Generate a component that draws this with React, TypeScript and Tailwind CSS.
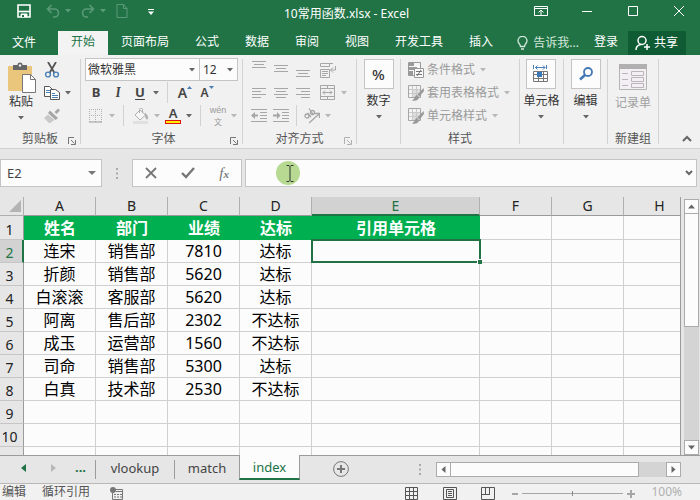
import React from 'react';

interface Employee {
    name: string;
    department: string;
    score: number;
    status: string;
}

const employees: Employee[] = [
    { name: '连宋', department: '销售部', score: 7810, status: '达标' },
    { name: '折颜', department: '销售部', score: 5620, status: '达标' },
    { name: '白滚滚', department: '客服部', score: 5620, status: '达标' },
    { name: '阿离', department: '售后部', score: 2302, status: '不达标' },
    { name: '成玉', department: '运营部', score: 1560, status: '不达标' },
    { name: '司命', department: '销售部', score: 5300, status: '达标' },
    { name: '白真', department: '技术部', score: 2530, status: '不达标' },
];

const menuTabs = ['开始', '页面布局', '公式', '数据', '审阅', '视图', '开发工具', '插入'];
const columns = ['A', 'B', 'C', 'D', 'E', 'F', 'G', 'H'];
const headers = ['姓名', '部门', '业绩', '达标', '引用单元格', '', '', ''];

function Icon({ w = 16, h = 16, className = '', children }: { w?: number; h?: number; className?: string; children: React.ReactNode }) {
    return (
        <svg width={w} height={h} viewBox={`0 0 ${w} ${h}`} fill="none" stroke="currentColor" className={`shrink-0 ${className}`} aria-hidden="true">
            {children}
        </svg>
    );
}

function Arrow({ className = 'text-[#666666]' }: { className?: string }) {
    return (
        <Icon w={6} h={4} className={className}>
            <path d="M0 0h6L3 3.5z" fill="currentColor" stroke="none" />
        </Icon>
    );
}

function Tool({ label, className = '', children }: { label: string; className?: string; children: React.ReactNode }) {
    return (
        <button aria-label={label} className={`flex h-[23px] w-[22px] shrink-0 items-center justify-center ${className}`}>
            {children}
        </button>
    );
}

function DropButton({ label, dim = false }: { label: string; dim?: boolean }) {
    return (
        <button aria-label={label} className="flex h-[23px] w-[10px] shrink-0 items-center justify-center">
            <Arrow className={dim ? 'text-[#b8b8b8]' : 'text-[#666666]'} />
        </button>
    );
}

// n horizontal strokes, each [x, y, width]
function Lines({ rows }: { rows: number[][] }) {
    return (
        <Icon w={16} h={20} className="text-[#a6a6a6]">
            <g fill="currentColor" stroke="none">
                {rows.map(([x, y, w], i) => <rect key={i} x={x} y={y} width={w} height={1} />)}
            </g>
        </Icon>
    );
}

function Launcher({ dim = false }: { dim?: boolean }) {
    return (
        <button aria-label="更多选项" className="absolute right-[4px] bottom-[2px]">
            <Icon w={8} h={8} className={dim ? 'text-[#b0b0b0]' : 'text-[#777777]'}>
                <path d="M.5 7V.5H6M3 3l3.5 3.5M7.500 3v4.500H3" />
            </Icon>
        </button>
    );
}

function Group({ title, className, launcher, children }: { title?: string; className: string; launcher?: React.ReactNode; children: React.ReactNode }) {
    return (
        <>
            <div className={`relative flex h-[89px] shrink-0 flex-col justify-between ${className}`}>
                <div>{children}</div>
                <div className="text-center leading-4 text-[#555555]">{title}</div>
                {launcher}
            </div>
            <div className="mt-px h-[85px] w-px shrink-0 bg-[#d2d2d2]" />
        </>
    );
}

function BigButton({ label, children }: { label: string; children: React.ReactNode }) {
    return (
        <button className="mx-auto flex flex-col items-center pt-px text-[#333333]">
            <span className="flex size-[30px] items-center justify-center border border-[#c4c4c4] bg-[#fcfcfc]">{children}</span>
            <span className="mt-1 leading-4">{label}</span>
            <span className="mt-[6px]"><Arrow /></span>
        </button>
    );
}

function TitleBar() {
    return (
        <div className="grid h-[31px] grid-cols-[1fr_auto_1fr] pt-1 pr-[14px] pl-[17px]">
            <div className="flex h-[14px] items-center">
                <button aria-label="保存">
                    <Icon w={14} h={14}>
                        <path d="M1 1h12v12H1z" strokeWidth="1.600" />
                        <path d="M1 7.500h12" strokeWidth="1.600" />
                        <path d="M4 13V10h6v3" fill="currentColor" />
                        <path d="M5 11h2v2H5z" fill="#217346" stroke="none" />
                    </Icon>
                </button>
                <button aria-label="撤消" className="ml-[15px] flex items-center gap-[5px] text-[#5b9a78]">
                    <Icon w={14} h={14}>
                        <path d="M5.500 1 1.500 5l4 4M2 5h6.500a4 4 0 0 1 0 8H7" strokeWidth="1.600" />
                    </Icon>
                    <Arrow className="text-[#5b9a78]" />
                </button>
                <button aria-label="恢复" className="ml-[10px] flex items-center gap-[5px] text-[#5b9a78]">
                    <Icon w={14} h={14}>
                        <path d="m8.500 1 4 4-4 4M12 5H5.500a4 4 0 0 0 0 8H7" strokeWidth="1.600" />
                    </Icon>
                    <Arrow className="text-[#5b9a78]" />
                </button>
                <button aria-label="新建" className="ml-[10px] text-[#5b9a78]">
                    <Icon w={12} h={14}>
                        <path d="M1 .5h6.500l3.500 4v9H1zM7.500.5v4H11" />
                    </Icon>
                </button>
                <button aria-label="自定义快速访问工具栏" className="ml-5">
                    <Icon w={6} h={8}>
                        <path d="M0 2.500h6" />
                        <path d="M0 4.500h6L3 8z" fill="currentColor" stroke="none" />
                    </Icon>
                </button>
            </div>
            <h1 className="pr-[10px] text-[12px] leading-5">10常用函数.xlsx - Excel</h1>
            <div className="flex h-[14px] items-center justify-end gap-8">
                <button aria-label="功能区显示选项">
                    <Icon w={14} h={14}>
                        <path d="M.5 2.500h13v9H.5zM.5 4.500h13M7 11V6M4.500 8.500 7 6l2.500 2.500" />
                    </Icon>
                </button>
                <button aria-label="最小化"><Icon w={14} h={14}><path d="M2 7.500h10" /></Icon></button>
                <button aria-label="最大化"><Icon w={14} h={14}><path d="M2.500 2.500h9v9h-9z" /></Icon></button>
                <button aria-label="关闭"><Icon w={14} h={14}><path d="m2 2 10 10M12 2 2 12" /></Icon></button>
            </div>
        </div>
    );
}

function MenuBar() {
    return (
        <nav className="flex h-6 items-stretch whitespace-nowrap">
            <button className="w-[58px] pr-[10px] pl-3 text-left">文件</button>
            {menuTabs.map((tab) => (
                <button key={tab} className={tab === '开始' ? 'bg-[#f3f3f3] px-[13px] pb-[2px] text-[#217346]' : 'px-[13px] pb-[2px]'}>{tab}</button>
            ))}
            <button className="ml-auto flex items-center gap-[5px] pb-px text-[#d5e8dc]">
                <Icon w={11} h={14}>
                    <path d="M3.500 10.500C3.500 8 1 7.500 1 4.800a4.500 4.500 0 0 1 9 0c0 2.700-2.500 3.200-2.500 5.700zM4 13h3" strokeWidth="1.300" />
                </Icon>
                告诉我...
            </button>
            <button className="ml-[15px] pb-[2px]">登录</button>
            <button className="mr-[14px] ml-[10px] flex items-center gap-[3px] bg-[#0f5c34] pr-2 pl-[7px]">
                <Icon w={16} h={16}>
                    <circle cx="7" cy="5.500" r="4" strokeWidth="1.500" />
                    <path d="M1 15c0-3 2-5 5-5.500M12 9v6M9 12h6" strokeWidth="1.500" />
                </Icon>
                共享
            </button>
        </nav>
    );
}

// small table with a brush lying across it
function TableIcon() {
    return (
        <Icon className="text-[#a6a6a6]">
            <path d="M.5.5h12v12H.5z" fill="#f3f3f3" />
            <path d="M5 5h7v7H5z" fill="#dddddd" stroke="none" />
            <path d="M4.500 1v11M8.500 1v11M1 4.500h11M1 8.500h11" stroke="#c9c9c9" />
            <path d="M15.500 3 9.500 9.500l2 2L16 6z" fill="#999999" stroke="none" />
            <path d="M9 10c-2.500.5-2 4-5 5.500 4 .8 7-.5 7-3.500z" fill="#999999" stroke="none" />
        </Icon>
    );
}

function Ribbon() {
    return (
        <div className="flex h-[94px] items-start border-b border-[#cfcfcf] bg-[#f1f1f1] pt-[3px] whitespace-nowrap">
            <Group title="剪贴板" className="w-20" launcher={<Launcher />}>
                <div className="flex gap-[5px] pl-[6px]">
                    <button className="flex w-[30px] flex-col items-center pt-1 text-[#333333]">
                        <Icon w={30} h={32}>
                            <rect x="2" y="4" width="24" height="25" rx="1" fill="#e9c67b" stroke="none" />
                            <path d="M7 3h4.500a2.500 2.500 0 0 1 5 0H21v5H7z" fill="#666666" stroke="none" />
                            <circle cx="14" cy="3.500" r="1.200" fill="#f1f1f1" stroke="none" />
                            <path d="M16.500 12.500h8l5 5v13h-13z" fill="#ffffff" stroke="#777777" />
                            <path d="M24.500 12.500v5h5" stroke="#777777" />
                        </Icon>
                        <span className="leading-4">粘贴</span>
                        <span className="mt-[6px]"><Arrow /></span>
                    </button>
                    <div>
                        <Tool label="剪切">
                            <Icon>
                                <path d="M4 0 10.500 11M12 0 5.500 11" stroke="#555555" strokeWidth="1.800" />
                                <circle cx="4" cy="12.500" r="2.400" stroke="#4a7fb5" strokeWidth="1.400" />
                                <circle cx="12" cy="12.500" r="2.400" stroke="#4a7fb5" strokeWidth="1.400" />
                            </Icon>
                        </Tool>
                        <div className="flex">
                            <Tool label="复制">
                                <Icon className="text-[#555555]">
                                    <path d="M.5 1.500h5l3 3v7h-8z" fill="#ffffff" />
                                    <path d="M2 5.500h4M2 7.500h4" stroke="#4a7fb5" />
                                    <path d="M6.500 4.500h5l4 3v7h-9z" fill="#ffffff" />
                                    <path d="M8 8.500h3M8 10.500h6M8 12.500h6" stroke="#4a7fb5" />
                                </Icon>
                            </Tool>
                            <DropButton label="复制选项" />
                        </div>
                        <Tool label="格式刷">
                            <Icon className="text-[#a6a6a6]">
                                <path d="m10.500 4 3.500-3.500L16 2.500 12.500 6zM6 2.500 14 10l-2.500 2L4 5z" fill="currentColor" stroke="none" />
                                <path d="M4 6.500 0 10l5.500 5.500L10.500 12z" fill="#c9c9c9" stroke="none" />
                            </Icon>
                        </Tool>
                    </div>
                </div>
            </Group>

            <Group title="字体" className="w-[161px] pl-1" launcher={<Launcher />}>
                <div className="flex pr-1 text-[#333333]">
                    <div className="relative w-[115px]">
                        <select aria-label="字体名称" className="h-[23px] w-full appearance-none border border-[#c4c4c4] bg-[#fcfcfc] pl-[2px]">
                            <option>微软雅黑</option>
                        </select>
                        <span className="pointer-events-none absolute inset-y-0 right-[5px] flex items-center"><Arrow /></span>
                    </div>
                    <div className="relative -ml-px flex-1">
                        <select aria-label="字号" className="h-[23px] w-full appearance-none border border-[#c4c4c4] bg-[#fcfcfc] pl-[3px]">
                            <option>12</option>
                        </select>
                        <span className="pointer-events-none absolute inset-y-0 right-[5px] flex items-center"><Arrow /></span>
                    </div>
                </div>
                <div className="flex items-center text-[13px] text-[#444444]">
                    <Tool label="加粗"><b>B</b></Tool>
                    <Tool label="倾斜" className="font-serif"><b><i>I</i></b></Tool>
                    <Tool label="下划线"><b className="underline underline-offset-2">U</b></Tool>
                    <DropButton label="下划线选项" />
                    <div className="mx-[6px] h-[21px] w-px bg-[#d2d2d2]" />
                    <Tool label="增大字号" className="text-[14px] font-semibold">
                        A<Icon w={5} h={14}><path d="M0 3 2.500 0 5 3z" fill="#4a7fb5" stroke="none" /></Icon>
                    </Tool>
                    <Tool label="减小字号" className="text-[12px] font-semibold">
                        A<Icon w={5} h={14}><path d="M0 0h5L2.500 3z" fill="#4a7fb5" stroke="none" /></Icon>
                    </Tool>
                </div>
                <div className="flex items-center text-[#b0b0b0]">
                    <Tool label="边框">
                        <Icon w={14} h={14}>
                            <path d="M.5 0v13M6.500 0v13M12.500 0v13M0 .5h13M0 6.500h13" strokeDasharray="1 1" />
                            <path d="M0 13h13" stroke="#999999" />
                        </Icon>
                    </Tool>
                    <DropButton label="边框选项" dim />
                    <div className="mx-[6px] h-[21px] w-px bg-[#d2d2d2]" />
                    <Tool label="填充颜色">
                        <Icon>
                            <path d="m2 7 5-5 5.500 5-5.500 5z" fill="#f6f6f6" />
                            <path d="M6.500 5V1.500a1.500 1.500 0 0 1 3 0V5" />
                            <path d="M12 5c2 2 3 4 2.500 6-1 .5-2-.5-2-5" fill="currentColor" />
                            <path d="M0 13h15v3H0z" fill="#e0e0e0" stroke="none" />
                        </Icon>
                    </Tool>
                    <DropButton label="填充颜色选项" dim />
                    <Tool label="字体颜色" className="flex-col text-[13px] font-semibold text-[#444444]">
                        <span className="leading-[13px]">A</span>
                        <span className="h-1 w-4 shrink-0 border border-[#dd1111] bg-[#ffee00]" />
                    </Tool>
                    <DropButton label="字体颜色选项" />
                    <div className="mx-[6px] h-[21px] w-px bg-[#d2d2d2]" />
                    <Tool label="拼音" className="flex-col text-[9px] leading-[11px] text-[#999999]">
                        <span className="font-['Liberation_Sans',sans-serif]">wén</span>
                        <span className="font-['Noto_Sans_CJK_SC',sans-serif] text-[8px]">文</span>
                    </Tool>
                    <DropButton label="拼音选项" dim />
                </div>
            </Group>

            <Group title="对齐方式" className="w-[113px]" launcher={<Launcher dim />}>
                <div className="flex items-center pl-[5px] text-[#a6a6a6]">
                    <Tool label="顶端对齐"><Lines rows={[[1, 1, 14], [3, 4, 10], [1, 7, 14]]} /></Tool>
                    <Tool label="垂直居中"><Lines rows={[[1, 5, 14], [3, 8, 10], [1, 11, 14]]} /></Tool>
                    <Tool label="底端对齐"><Lines rows={[[1, 10, 14], [3, 13, 10], [1, 16, 14]]} /></Tool>
                    <Tool label="自动换行" className="ml-[3px]">
                        <Icon>
                            <path d="M.5 1.500h9v3h-9zM.5 7.500h9v8h-9zM2 9.500h6M2 11.500h6M2 13.500h4M9 1.500h4M15.500 4v4H10.500M13 5.500 10.500 8l2.500 2.500" />
                        </Icon>
                    </Tool>
                </div>
                <div className="flex items-center pl-[5px] text-[#a6a6a6]">
                    <Tool label="左对齐"><Lines rows={[[1, 5, 14], [1, 8, 9], [1, 11, 14], [1, 14, 9]]} /></Tool>
                    <Tool label="居中"><Lines rows={[[1, 5, 14], [3, 8, 10], [1, 11, 14], [3, 14, 10]]} /></Tool>
                    <Tool label="右对齐"><Lines rows={[[1, 5, 14], [6, 8, 9], [1, 11, 14], [6, 14, 9]]} /></Tool>
                    <Tool label="合并后居中" className="ml-[3px]">
                        <Icon>
                            <path d="M.5.5h14v14H.5zM.5 3.500h14M.5 11.500h14M7.500 0v3M7.500 12v3M3 7.500h9M5 5.500l-2 2 2 2M10 5.500l2 2-2 2" />
                        </Icon>
                    </Tool>
                    <DropButton label="合并选项" dim />
                </div>
                <div className="flex items-center pl-[5px] text-[#a6a6a6]">
                    <Tool label="减少缩进量">
                        <Icon><path d="M0 1.500h16M9 4.500h7M9 7.500h7M9 10.500h7M0 13.500h16" /><path d="M0 7.500 4 4v2.500h3v2H4V11z" fill="currentColor" stroke="none" /></Icon>
                    </Tool>
                    <Tool label="增加缩进量">
                        <Icon><path d="M0 1.500h16M9 4.500h7M9 7.500h7M9 10.500h7M0 13.500h16" /><path d="M7.500 7.500 4 4v2.500H0v2h4V11z" fill="currentColor" stroke="none" /></Icon>
                    </Tool>
                    <div className="mx-1 h-[21px] w-px bg-[#d2d2d2]" />
                    <Tool label="方向">
                        <Icon>
                            <circle cx="3" cy="8" r="2" strokeWidth="1.300" />
                            <path d="m3.500 5 3.500 4M5 .5 9.500 7" strokeWidth="1.300" />
                            <circle cx="8.500" cy="4.500" r="2" strokeWidth="1.300" />
                            <path d="m5 15 10-9M11 5.500h4.500V10" strokeWidth="1.300" />
                        </Icon>
                    </Tool>
                    <DropButton label="方向选项" dim />
                </div>
            </Group>

            <Group className="w-[43px]">
                <BigButton label="数字"><span className="text-[15px] font-medium text-[#333333]">%</span></BigButton>
            </Group>

            <Group title="样式" className="w-[118px]">
                <div className="pl-[7px] text-[#9a9a9a]">
                    <button className="flex h-[23px] items-center gap-[3px]">
                        <Icon className="text-[#999999]">
                            <path d="M.5.5h12v13H.5z" fill="#f6f6f6" />
                            <path d="M1 1h5v3H1zM1 5h8v3H1zM1 9h4v4H1z" fill="currentColor" stroke="none" />
                            <path d="M6.500 6.500h9v9h-9z" fill="#fafafa" />
                            <path d="M8 9.500h6M8 12.500h6M13 8l-4 6" stroke="#777777" />
                        </Icon>
                        条件格式
                        <span className="ml-[2px]"><Arrow className="text-[#b8b8b8]" /></span>
                    </button>
                    <button className="flex h-[23px] items-center gap-[3px]">
                        <TableIcon />
                        套用表格格式
                        <span className="ml-[2px]"><Arrow className="text-[#b8b8b8]" /></span>
                    </button>
                    <button className="flex h-[23px] items-center gap-[3px]">
                        <TableIcon />
                        单元格样式
                        <span className="ml-[2px]"><Arrow className="text-[#b8b8b8]" /></span>
                    </button>
                </div>
            </Group>

            <Group className="w-[43px]">
                <BigButton label="单元格">
                    <Icon w={16} h={18}>
                        <path d="M.5 0v4M13.500 0v4M2 2.500h10M4.500.5l-2 2 2 2M10 .5l2 2-2 2" stroke="#4a7fb5" />
                        <path d="M.5 6.500h14v10H.5zM5.500 6v10M10.500 6v10M0 9.500h15M0 13.500h15" stroke="#777777" />
                        <path d="M4 7h5v5H4z" fill="#3b78b8" stroke="none" />
                    </Icon>
                </BigButton>
            </Group>

            <Group className="w-[43px]">
                <BigButton label="编辑">
                    <Icon w={14} h={14} className="text-[#4279b5]">
                        <circle cx="9" cy="5" r="4" strokeWidth="1.800" />
                        <path d="m6 8-5 4.500" strokeWidth="2.600" />
                    </Icon>
                </BigButton>
            </Group>

            <Group title="新建组" className="w-[50px]">
                <button className="mx-auto flex flex-col items-center pt-[6px] text-[#a0a0a0]">
                    <Icon w={28} h={26}>
                        <path d="M.5.5h27v25H.5z" fill="#f3eff3" stroke="#b5b5b5" />
                        <path d="M0 0h28v5H0z" fill="#b0b0b0" stroke="none" />
                        <path d="M3 9.500h6M3 15.500h6M3 21.500h6M12.500 7.500h12v4h-12zM12.500 13.500h12v4h-12zM12.500 19.500h12v4h-12z" stroke="#bbb4bb" />
                    </Icon>
                    <span className="mt-[5px] leading-4">记录单</span>
                </button>
            </Group>

            <button aria-label="折叠功能区" className="mr-2 ml-auto self-end pb-1">
                <Icon w={10} h={10} className="text-[#666666]"><path d="m1 7 4-4 4 4" strokeWidth="2" /></Icon>
            </button>
        </div>
    );
}

function Dots() {
    return (
        <Icon w={2} h={11} className="text-[#aaaaaa]">
            <path d="M0 0h2v2H0zM0 4.500h2v2H0zM0 9h2v2H0z" fill="currentColor" stroke="none" />
        </Icon>
    );
}

function FormulaBar() {
    return (
        <div className="flex h-[48px] items-start pt-[10px] pr-[3px]">
            <div className="relative w-[102px] shrink-0">
                <input aria-label="名称框" defaultValue="E2" className="h-7 w-full border border-[#c4c4c4] bg-[#fcfcfc] pl-[6px] text-[13px] text-[#444444] outline-none" />
                <span className="pointer-events-none absolute inset-y-0 right-[6px] flex items-center">
                    <Icon w={8} h={4}><path d="M0 0h8L4 4z" fill="#777777" stroke="none" /></Icon>
                </span>
            </div>
            <div className="flex h-7 w-[30px] shrink-0 items-center justify-center"><Dots /></div>
            <div className="flex h-7 w-[110px] shrink-0 items-center justify-around border border-[#c4c4c4] bg-[#fcfcfc] text-[#777777]">
                <button aria-label="取消"><Icon w={12} h={12}><path d="m1 1 10 10M11 1 1 11" strokeWidth="1.800" /></Icon></button>
                <button aria-label="输入"><Icon w={14} h={12}><path d="m1 6 4 4 8-9" strokeWidth="2.400" /></Icon></button>
                <button aria-label="插入函数" className="font-['Liberation_Serif',serif] text-[15px] leading-4 italic">f<b className="text-[11px]">x</b></button>
            </div>
            <div className="relative ml-[3px] flex-1">
                <input aria-label="编辑栏" className="h-7 w-full border border-[#c4c4c4] bg-[#fcfcfc] px-2 outline-none" />
                <span className="pointer-events-none absolute top-[2px] left-[31px] size-6 rounded-full bg-[#b7d992]" />
                <Icon w={8} h={17} className="pointer-events-none absolute top-[6px] left-[41px] text-[#333333]">
                    <path d="M.5.5H3l1 1 1-1h2.500M4 1.500v14M.5 16.500H3l1-1 1 1h2.500" />
                </Icon>
                <button aria-label="展开编辑栏" className="absolute inset-y-0 right-[4px] flex items-center">
                    <Icon w={8} h={6} className="text-[#666666]"><path d="m1 1 3 3 3-3" strokeWidth="2" /></Icon>
                </button>
            </div>
        </div>
    );
}

function RowNumber({ n, active = false }: { n?: number; active?: boolean }) {
    return (
        <th scope="row" className={active ? 'border-r-2 border-b border-r-[#217346] border-b-[#c6c6c6] bg-[#d2d2d2] p-0 pt-1 pr-[3px] text-[14px] leading-[18px] font-normal text-[#217346]' : 'border-r border-b border-r-[#9b9b9b] border-b-[#c6c6c6] bg-[#e6e6e6] p-0 pt-1 pr-[4px] text-[14px] leading-[18px] font-normal text-[#222222]'}>
            {n}
        </th>
    );
}

function Sheet() {
    const cell = 'border-r border-b border-[#d0d0d0] p-0 text-center';
    return (
        <div className="min-w-0 flex-1 overflow-hidden border-r border-[#9b9b9b] bg-[#fcfcfc]">
            <table className="w-[696px] table-fixed border-separate border-spacing-0 text-[16px] leading-[22px] text-black">
                <colgroup>
                    <col className="w-6" />
                    {columns.map((c) => <col key={c} className={c === 'E' ? 'w-[168px]' : 'w-[72px]'} />)}
                </colgroup>
                <thead>
                    <tr className="h-[19px] bg-[#e6e6e6] text-[14px] leading-[18px] text-[#222222]">
                        <th className="border-r border-b border-[#b0b0b0] p-0">
                            <Icon w={12} h={12} className="ml-[9px] text-[#b4b4b4]"><path d="M12 0v12H0z" fill="currentColor" stroke="none" /></Icon>
                        </th>
                        {columns.map((c) => (
                            <th key={c} scope="col" className={c === 'E' ? 'border-r border-b-2 border-r-[#b0b0b0] border-b-[#217346] bg-[#d2d2d2] p-0 leading-[17px] font-normal text-[#217346]' : 'border-r border-b border-r-[#b0b0b0] border-b-[#9b9b9b] p-0 font-normal'}>{c}</th>
                        ))}
                    </tr>
                </thead>
                <tbody>
                    <tr className="h-6">
                        <RowNumber n={1} />
                        {headers.map((h, i) => (
                            <td key={i} className={h ? 'bg-[#00b050] p-0 text-center font-bold text-white' : cell}>{h}</td>
                        ))}
                    </tr>
                    {employees.map((e, i) => (
                        <tr key={e.name} className="h-[23px]">
                            <RowNumber n={i + 2} active={i === 0} />
                            <td className={cell}>{e.name}</td>
                            <td className={cell}>{e.department}</td>
                            <td className={cell}>{e.score}</td>
                            <td className={cell}>{e.status}</td>
                            <td className={i === 0 ? 'relative p-0' : cell}>
                                {i === 0 && (
                                    <>
                                        <span className="absolute -inset-x-px -top-px bottom-0 border-2 border-[#217346]" />
                                        <span className="absolute -right-[2px] -bottom-px size-[5px] border-t border-l border-white bg-[#217346]" />
                                    </>
                                )}
                            </td>
                            <td className={cell} />
                            <td className={cell} />
                            <td className={cell} />
                        </tr>
                    ))}
                    {[9, 10, undefined].map((n, i) => (
                        <tr key={i} className="h-[23px]">
                            <RowNumber n={n} />
                            {columns.map((c) => <td key={c} className={cell} />)}
                        </tr>
                    ))}
                </tbody>
            </table>
        </div>
    );
}

function ScrollButton({ label, d }: { label: string; d: string }) {
    return (
        <button aria-label={label} className="flex size-[15px] shrink-0 items-center justify-center border border-[#ababab] bg-[#fcfcfc]">
            <Icon w={7} h={7}><path d={d} fill="#666666" stroke="none" /></Icon>
        </button>
    );
}

function SheetTabs() {
    return (
        <div className="flex h-7 shrink-0 items-start border-t border-[#9b9b9b] pr-[19px] text-[13px] text-[#444444]">
            <div className="flex h-6 w-[95px] shrink-0 items-center pl-[21px]">
                <button aria-label="上一个工作表"><Icon w={5} h={8}><path d="M5 0v8L0 4z" fill="#217346" stroke="none" /></Icon></button>
                <button aria-label="下一个工作表" className="ml-[25px]"><Icon w={5} h={8}><path d="M0 0v8l5-4z" fill="#b8b8b8" stroke="none" /></Icon></button>
                <button className="ml-[19px] font-bold text-[#217346]">...</button>
            </div>
            <button className="my-1 h-[19px] w-[79px] border-l border-[#9b9b9b] pb-[3px] leading-4">vlookup</button>
            <button className="my-1 h-[19px] w-[65px] border-l border-[#9b9b9b] pb-[3px] leading-4">match</button>
            <button className="-mt-px h-[25px] w-[61px] border-r border-b-2 border-l border-x-[#9b9b9b] border-b-[#217346] bg-[#fcfcfc] pt-[2px] text-[#217346]">index</button>
            <button aria-label="新工作表" className="mt-[5px] ml-[33px]">
                <Icon className="text-[#777777]">
                    <circle cx="8" cy="8" r="7.400" />
                    <path d="M8 4v8M4 8h8" strokeWidth="2" />
                </Icon>
            </button>
            <div className="mt-2 ml-auto"><Dots /></div>
            <div className="mt-[6px] ml-[15px] flex h-[15px] w-[245px] bg-[#d4d4d4]">
                <ScrollButton label="向左滚动" d="M5.500 0v7L1.500 3.500z" />
                <div className="-ml-px w-[189px] border border-[#ababab] bg-[#fcfcfc]" />
                <div className="ml-auto"><ScrollButton label="向右滚动" d="M1.500 0v7l4-3.500z" /></div>
            </div>
        </div>
    );
}

function StatusBar() {
    return (
        <footer className="flex h-[17px] shrink-0 items-end border-t border-[#b8b8b8] bg-[#f1f1f1] pr-[18px] pl-[2px] leading-4 text-[#555555]">
            <span>编辑</span>
            <span className="ml-4">循环引用</span>
            <button aria-label="录制宏" className="ml-5">
                <Icon w={13} h={13} className="text-[#777777]">
                    <path d="M2.500 6v6.500h10v-10H6M4 7.500h2M7 7.500h2M10 7.500h2M4 10h2M7 10h2M10 10h2M6 4.500h6" />
                    <circle cx="3" cy="3" r="3" fill="currentColor" stroke="none" />
                </Icon>
            </button>
            <button aria-label="普通" className="ml-auto">
                <Icon w={13} h={13}><path d="M.5.5h12v12H.5zM4.500 0v13M8.500 0v13M0 4.500h13M0 8.500h13" /></Icon>
            </button>
            <button aria-label="页面布局视图" className="ml-[25px]">
                <Icon w={14} h={13}><path d="M.5.5h13v12H.5zM3.500 2.500h7v8h-7zM5 4.500h4M5 6.500h4M5 8.500h4" /></Icon>
            </button>
            <button aria-label="分页预览" className="ml-6">
                <Icon w={14} h={13}><path d="M.5.5h13v12H.5zM4.500 0v7M8.500 0v7M0 7.500h9" /></Icon>
            </button>
            <button aria-label="缩小" className="ml-[17px] text-[#a6a6a6]"><Icon w={6} h={13}><path d="M0 7h6" strokeWidth="2" /></Icon></button>
            <input
                type="range"
                aria-label="缩放"
                defaultValue={50}
                className="mx-1 h-[13px] w-[101px] appearance-none bg-transparent [&::-webkit-slider-runnable-track]:h-px [&::-webkit-slider-runnable-track]:bg-[#a6a6a6] [&::-webkit-slider-thumb]:-mt-[2px] [&::-webkit-slider-thumb]:h-[5px] [&::-webkit-slider-thumb]:w-px [&::-webkit-slider-thumb]:appearance-none [&::-webkit-slider-thumb]:bg-[#888888]"
            />
            <button aria-label="放大" className="text-[#a6a6a6]"><Icon w={8} h={13}><path d="M0 7h8M4 3v8" strokeWidth="2" /></Icon></button>
            <span className="ml-[15px] w-8 text-right text-[#b0b0b0]">100%</span>
        </footer>
    );
}

export default function App() {
    return (
        <div className="flex h-screen flex-col overflow-hidden bg-[#e6e6e6] font-['Noto_Sans','Noto_Sans_CJK_SC',sans-serif] text-[12px]">
            <header className="shrink-0 bg-[#217346] text-white">
                <TitleBar />
                <MenuBar />
                <Ribbon />
            </header>
            <FormulaBar />
            <main className="flex min-h-0 flex-1">
                <Sheet />
                <div className="flex w-[19px] shrink-0 flex-col pt-[2px] pr-px pl-[3px]">
                    <ScrollButton label="向上滚动" d="M0 5.500h7L3.500 1.500z" />
                    <div className="flex-1 bg-[#d4d4d4]">
                        <div className="-mt-px h-[114px] border border-[#ababab] bg-[#fcfcfc]" />
                    </div>
                    <ScrollButton label="向下滚动" d="M0 1.500h7L3.500 5.500z" />
                </div>
            </main>
            <SheetTabs />
            <StatusBar />
        </div>
    );
}
